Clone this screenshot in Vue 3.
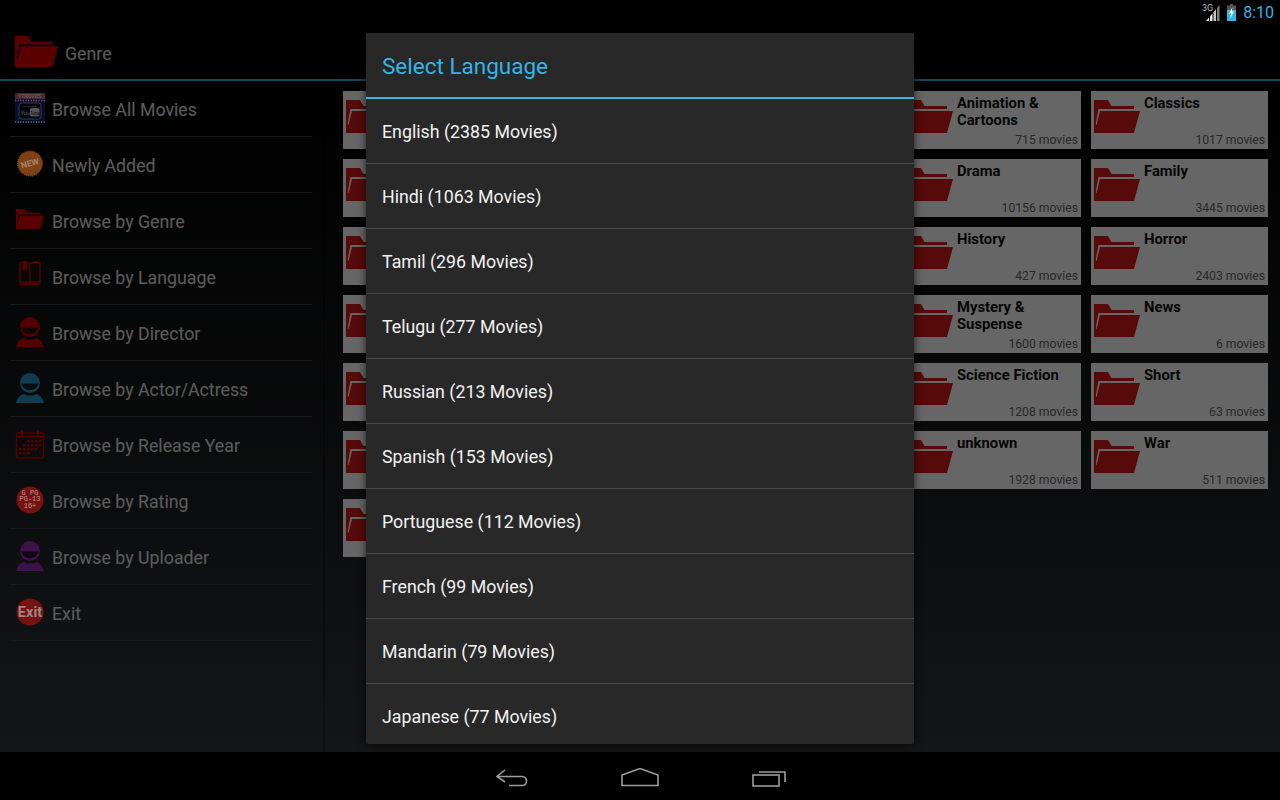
<script setup>
const menu = [
  { icon: 'yt', label: 'Browse All Movies' },
  { icon: 'new', label: 'Newly Added', bright: true },
  { icon: 'folder', label: 'Browse by Genre' },
  { icon: 'book', label: 'Browse by Language' },
  { icon: 'person', color: '#d40000', label: 'Browse by Director' },
  { icon: 'person', color: '#2a9cc8', label: 'Browse by Actor/Actress' },
  { icon: 'calendar', label: 'Browse by Release Year' },
  { icon: 'rating', label: 'Browse by Rating', bright: true },
  { icon: 'person', color: '#9a2bb8', label: 'Browse by Uploader' },
  { icon: 'exit', label: 'Exit', bright: true }
]

// the first three columns are behind the dialog, only their left edge shows
const genres = [
  {}, {}, {}, { name: 'Animation & Cartoons', count: 715 }, { name: 'Classics', count: 1017 },
  {}, {}, {}, { name: 'Drama', count: 10156 }, { name: 'Family', count: 3445 },
  {}, {}, {}, { name: 'History', count: 427 }, { name: 'Horror', count: 2403 },
  {}, {}, {}, { name: 'Mystery & Suspense', count: 1600 }, { name: 'News', count: 6 },
  {}, {}, {}, { name: 'Science Fiction', count: 1208 }, { name: 'Short', count: 63 },
  {}, {}, {}, { name: 'unknown', count: 1928 }, { name: 'War', count: 511 },
  {}
]

const languages = [
  'English (2385 Movies)',
  'Hindi (1063 Movies)',
  'Tamil (296 Movies)',
  'Telugu (277 Movies)',
  'Russian (213 Movies)',
  'Spanish (153 Movies)',
  'Portuguese (112 Movies)',
  'French (99 Movies)',
  'Mandarin (79 Movies)',
  'Japanese (77 Movies)'
]

const folderBack = 'M0 0H14L17.5 6H40V9H4.5L2 22V33H0Z'
const folderFront = 'M6 11H46L40 33H0V25H2.5Z'
</script>

<template>
  <div class="screen">
    <div class="status">
      <svg class="signal" width="18" height="17" viewBox="0 0 18 17">
        <text x="0" y="7" class="net">3G</text>
        <path d="M4 17L7 13.500V17Z" fill="#f0f0f0" />
        <path d="M8 17V12.300L10.500 9.400V17Z" fill="#e8e8e8" />
        <path d="M11.500 17V8.200L14 5.200V17Z" fill="#c4c4c4" />
        <path d="M15 17V4L17.500 1V17Z" fill="#7c7c7c" />
      </svg>
      <svg class="battery" width="9" height="17" viewBox="0 0 9 17">
        <path d="M3 0H6V1.500H9V17H0V1.500H3Z" fill="#555" />
        <path d="M0 6H9V17H0Z" fill="#33b5e5" />
        <path d="M5.500 3L2 9.500H4.200L3.200 14.500L7 7.500H4.800Z" fill="#fff" />
      </svg>
      <span class="time">8:10</span>
    </div>

    <div class="app">
      <header class="actionbar">
        <svg class="title-icon" width="45" height="31" viewBox="0 0 46 33">
          <path :d="folderBack" fill="#e00000" />
          <path :d="folderFront" fill="#e00000" />
        </svg>
        <span class="page-title">Genre</span>
      </header>

      <div class="body">
        <nav class="side">
          <div v-for="item in menu" :key="item.label" class="side-row">
            <svg class="side-icon" :class="{ bright: item.bright }" width="32" height="32" viewBox="0 0 32 32">
              <g v-if="item.icon === 'yt'">
                <rect x="1" y="1" width="30" height="6" fill="#b8607c" />
                <text x="16" y="5.600" class="yt-top">YTMOVIES</text>
                <rect x="1" y="7" width="30" height="24" fill="#0a2a6e" />
                <path d="M1 8.500H31M1 30H31" stroke="#fff" stroke-width="1.300" stroke-dasharray="1.200 1.400" />
                <rect x="5" y="11" width="22" height="16" rx="2.500" fill="#050a18" stroke="#a0bce8" stroke-width=".8" />
                <text x="16" y="14.600" class="yt-by">POWERED BY</text>
                <text x="11.500" y="22.500" class="yt-you">You</text>
                <rect x="16" y="16" width="9.500" height="8.500" rx="2" fill="#d8d8d8" />
                <text x="20.700" y="22.500" class="yt-tube">Tube</text>
              </g>
              <g v-else-if="item.icon === 'new'">
                <circle cx="16" cy="15.500" r="12.300" fill="#7e4216" stroke="#7e4216" stroke-width="1.600" stroke-dasharray="1 1" />
                <text x="16" y="18.300" class="new-txt" transform="rotate(-14 16 15.500)">NEW</text>
              </g>
              <g v-else-if="item.icon === 'folder'" transform="translate(2 5) scale(.61)">
                <path :d="folderBack" fill="#e00000" />
                <path :d="folderFront" fill="#e00000" />
              </g>
              <g v-else-if="item.icon === 'book'" fill="none" stroke="#d40000">
                <path d="M6 3C10 1.500 13 2 16 3.500C19 2 22 1.500 26 3V22H6Z" stroke-width="1.600" />
                <path d="M16 3.500V22" stroke-width="1.400" />
                <path d="M8.500 3H13V11.500L10.700 9.500L8.500 11.500Z" fill="#d40000" stroke="none" />
                <path d="M6 24H26" stroke-width="2.400" />
                <path d="M6 27H26" stroke-width="1.500" opacity=".3" />
              </g>
              <g v-else-if="item.icon === 'person'">
                <circle cx="16" cy="11" r="10" :fill="item.color" />
                <path d="M7.500 11.500H24.500C24 15.500 20.500 18 16 18C11.500 18 8 15.500 7.500 11.500Z" fill="#000" opacity=".75" />
                <path d="M2 31C3 26 7 22.500 10 22C12 24 20 24 22 22C25 22.500 29 26 30 31Z" :fill="item.color" />
              </g>
              <g v-else-if="item.icon === 'calendar'">
                <rect x="2.500" y="5" width="27" height="25" rx="1" fill="none" stroke="#d40000" stroke-width="1.300" />
                <path d="M2.500 8.500H29.500" stroke="#d40000" stroke-width="1.300" />
                <path d="M8 2.500V7M24 2.500V7" stroke="#d40000" stroke-width="2" />
                <path d="M13 12h2.500v2.500H13zM17 12h2.500v2.500H17zM21 12h2.500v2.500H21zM25 12h2v2.500H25zM9 16h2.500v2.500H9zM13 16h2.500v2.500H13zM17 16h2.500v2.500H17zM21 16h2.500v2.500H21zM25 16h2v2.500H25zM5 20h2.500v2.500H5zM9 20h2.500v2.500H9zM13 20h2.500v2.500H13zM17 20h2.500v2.500H17zM21 20h2.500v2.500H21zM5 24h2.500v2.500H5zM9 24h2.500v2.500H9zM13 24h2.500v2.500H13z" fill="#d40000" />
              </g>
              <g v-else-if="item.icon === 'rating'">
                <circle cx="16" cy="16" r="13.500" fill="#761212" />
                <text x="16" y="10.500" class="rate">G PG</text>
                <text x="16" y="17" class="rate">PG-13</text>
                <text x="16" y="24" class="rate">16+</text>
              </g>
              <g v-else>
                <circle cx="16" cy="16" r="13.500" fill="#761212" />
                <text x="16" y="20.800" class="exit-txt">Exit</text>
              </g>
            </svg>
            <span class="side-label">{{ item.label }}</span>
          </div>
        </nav>

        <main class="grid">
          <div v-for="(g, i) in genres" :key="i" class="tile">
            <svg class="tile-icon" width="46" height="33" viewBox="0 0 46 33">
              <path :d="folderBack" fill="#d81a1a" />
              <path :d="folderFront" fill="#d81a1a" />
            </svg>
            <div class="tile-text">
              <div class="tile-name">{{ g.name }}</div>
              <div v-if="g.count" class="tile-count">{{ g.count }} movies</div>
            </div>
          </div>
        </main>
      </div>

      <div class="dim"></div>
    </div>

    <footer class="navbar">
      <svg width="34" height="20" viewBox="0 0 34 20" fill="none" stroke="#9c9c9c" stroke-width="1.600">
        <path d="M10 2L2 8.500L10 14" />
        <path d="M2 8.500H27C33 8.500 33 17.500 27 17.500H14" />
      </svg>
      <svg width="38" height="20" viewBox="0 0 38 20" fill="none" stroke="#9c9c9c" stroke-width="1.600">
        <path d="M1 7L19 .5L37 7V17.500H1Z" />
      </svg>
      <svg width="36" height="20" viewBox="0 0 36 20" fill="none" stroke="#9c9c9c" stroke-width="1.600">
        <rect x="2" y="7" width="26" height="11" />
        <path d="M8 4H34V14" />
      </svg>
    </footer>

    <section class="dialog">
      <h2 class="dialog-title">Select Language</h2>
      <div class="dialog-list">
        <div v-for="lang in languages" :key="lang" class="lang">{{ lang }}</div>
      </div>
    </section>
  </div>
</template>

<style scoped>
.screen {
  position: relative;
  width: 1280px;
  height: 800px;
  overflow: hidden;
  background: #000;
  font-family: Roboto, "Liberation Sans", sans-serif;
  display: flex;
  flex-direction: column;
}

.status {
  height: 25px;
  flex: none;
  display: flex;
  align-items: center;
  justify-content: flex-end;
  padding-right: 6px;
  gap: 7px;
  background: #000;
}

.net {
  font-size: 9px;
  fill: #b8b8b8;
  font-family: Roboto, sans-serif;
}

.time {
  color: #33b5e5;
  font-size: 16px;
}

.app {
  position: relative;
  flex: 1;
  display: flex;
  flex-direction: column;
  min-height: 0;
}

.actionbar {
  height: 54px;
  flex: none;
  box-sizing: border-box;
  display: flex;
  align-items: center;
  padding-left: 14px;
  background: #000;
}

.title-icon {
  margin-right: 6px;
  margin-top: -1px;
}

.page-title {
  color: #e0e0e0;
  font-size: 17.800px;
  margin-top: 2px;
}

.body {
  flex: 1;
  display: flex;
  min-height: 0;
  border-top: 2px solid #33b5e5;
  background: linear-gradient(#000, #32363a);
}

.side {
  width: 325px;
  flex: none;
  box-sizing: border-box;
  padding: 0 11px 0 10px;
  border-right: 2px solid rgba(0, 0, 0, 0.3);
}

.side-row {
  height: 56px;
  box-sizing: border-box;
  display: flex;
  align-items: center;
  gap: 6px;
  border-bottom: 1px solid #3e4044;
  color: #e4e4e4;
  font-size: 17.750px;
  padding-bottom: 1px;
}

.side-label {
  margin-top: 4px;
}

.side-icon {
  flex: none;
  margin-left: 4px;
}

/* these icons stay brighter than the dimmed list in the reference */
.side-icon.bright {
  position: relative;
  z-index: 1;
}

.yt-top {
  font-size: 4.800px;
  font-weight: 700;
  fill: #f0e0e4;
  text-anchor: middle;
  font-family: Roboto, sans-serif;
}

.yt-by {
  font-size: 2.500px;
  fill: #bbb;
  text-anchor: middle;
  font-family: Roboto, sans-serif;
}

.yt-you {
  font-size: 6px;
  fill: #ddd;
  text-anchor: middle;
  font-family: Roboto, sans-serif;
}

.yt-tube {
  font-size: 4.500px;
  fill: #222;
  text-anchor: middle;
  font-family: Roboto, sans-serif;
}

.new-txt {
  font-size: 8.500px;
  font-weight: 700;
  fill: #a88468;
  text-anchor: middle;
  font-family: Roboto, sans-serif;
}

.rate {
  font-size: 7px;
  fill: #b89a9a;
  text-anchor: middle;
  font-family: "Liberation Mono", monospace;
}

.exit-txt {
  font-size: 14.500px;
  font-weight: 700;
  fill: #9c8484;
  text-anchor: middle;
  font-family: Roboto, sans-serif;
}

.grid {
  flex: 1;
  display: grid;
  grid-template-columns: repeat(5, 177px);
  grid-auto-rows: 58px;
  gap: 10px;
  padding: 10px 0 0 18px;
  align-content: start;
}

.tile {
  display: flex;
  background: #fff;
  padding-left: 3px;
}

.tile-icon {
  flex: none;
  margin-top: 9px;
}

.tile-text {
  flex: 1;
  display: flex;
  flex-direction: column;
  justify-content: space-between;
  margin-left: 4px;
  padding: 4px 3px 1px 0;
  min-width: 0;
}

.tile-name {
  color: #111;
  font-size: 14.800px;
  font-weight: 700;
  line-height: 17px;
}

.tile-count {
  color: #666;
  font-size: 12.200px;
  line-height: 15px;
  text-align: right;
}

.dim {
  position: absolute;
  inset: 0;
  background: rgba(0, 0, 0, 0.6);
}

.navbar {
  height: 48px;
  flex: none;
  display: flex;
  background: #000;
  align-items: center;
  justify-content: center;
  gap: 92px;
  padding: 4px 0 0 2px;
  box-sizing: border-box;
}

.dialog {
  position: absolute;
  left: 366px;
  top: 33px;
  width: 548px;
  height: 711px;
  overflow: hidden;
  background: #282828;
  border-radius: 2px;
  box-shadow: 0 0 8px rgba(0, 0, 0, 0.7);
}

.dialog-title {
  margin: 0;
  height: 66px;
  box-sizing: border-box;
  border-bottom: 2px solid #33b5e5;
  padding-left: 16px;
  color: #33b5e5;
  font-size: 22.500px;
  font-weight: 400;
  line-height: 67px;
}

.lang {
  height: 65px;
  box-sizing: border-box;
  border-bottom: 1px solid #4a4a4a;
  padding-left: 16px;
  color: #f2f2f2;
  font-size: 17.800px;
  line-height: 65px;
}
</style>
